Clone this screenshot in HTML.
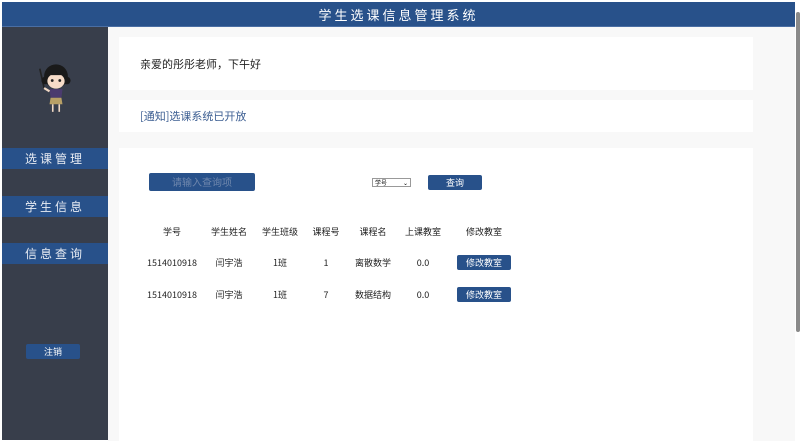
<!DOCTYPE html>
<html><head><meta charset="utf-8"><style>
*{margin:0;padding:0;box-sizing:border-box}
body{width:800px;height:441px;overflow:hidden;background:#fff;font-family:"Noto Sans CJK SC","Liberation Sans",sans-serif;position:relative}
.a{position:absolute}
.hdr{left:2px;top:2px;width:793px;height:25px;background:#28518a;color:#fff;font-size:13px;letter-spacing:3px;text-align:center;line-height:25px;border-bottom:1px solid #4a6ea3}
.side{left:2px;top:27px;width:106px;height:413px;background:#383e4b}
.main{left:108px;top:27px;width:687px;height:414px;background:#f8f8f8}
.card{background:#fff;left:119px;width:634px}
.nav{left:2px;width:106px;height:21px;background:#28518a;color:#e8ecf3;font-size:12px;letter-spacing:3px;text-align:center;line-height:21px}
.btn{background:#28518a;color:#fff;border-radius:2px;font-size:9px;text-align:center}
.c{position:absolute;font-size:9px;line-height:12px;color:#222;transform:translateX(-50%);white-space:nowrap}
.sb{left:796px;top:12px;width:4px;height:320px;background:#8a8a8a;border-radius:2px}
</style></head><body>
<div class="a hdr">学生选课信息管理系统</div>
<div class="a side"></div>
<div class="a main"></div>
<div class="a sb"></div>
<svg class="a" style="left:34px;top:60px" width="44" height="54" viewBox="0 0 40 50">
<line x1="5" y1="8" x2="9" y2="26" stroke="#222" stroke-width="1.5"/>
<circle cx="20" cy="15" r="11" fill="#1a1a1a"/>
<circle cx="10" cy="19" r="3.5" fill="#1a1a1a"/><circle cx="30" cy="19" r="3.5" fill="#1a1a1a"/>
<ellipse cx="20" cy="19.5" rx="8" ry="7" fill="#f6dcc8"/>
<rect x="12" y="9" width="16" height="5" fill="#1a1a1a"/>
<circle cx="16.5" cy="19" r="1.3" fill="#222"/><circle cx="23.5" cy="19" r="1.3" fill="#222"/>
<path d="M14 27 L26 27 L25 35 L15 35Z" fill="#4b3b6e"/>
<path d="M15 35 L25 35 L26 41 L14 41Z" fill="#b8a066"/>
<line x1="17" y1="41" x2="17" y2="48" stroke="#f0d8c4" stroke-width="1.5"/>
<line x1="23" y1="41" x2="23" y2="48" stroke="#f0d8c4" stroke-width="1.5"/>
<path d="M9 26 L14 29" stroke="#f0d8c4" stroke-width="2"/>
</svg>
<div class="a nav" style="top:148px">选课管理</div>
<div class="a nav" style="top:196px">学生信息</div>
<div class="a nav" style="top:243px">信息查询</div>
<div class="a btn" style="left:26px;top:344px;width:54px;height:15px;line-height:15px">注销</div>
<div class="a card" style="top:37px;height:53px"><div class="a" style="left:21px;top:20px;font-size:11px;line-height:14px;color:#222">亲爱的彤彤老师，下午好</div></div>
<div class="a card" style="top:100px;height:32px"><div class="a" style="left:21px;top:9px;font-size:11px;line-height:14px;color:#3c5e92">[通知]选课系统已开放</div></div>
<div class="a card" style="top:148px;height:293px"></div>
<div class="a btn" style="left:149px;top:173px;width:106px;height:18px;line-height:18px;color:#6f87ad;font-size:10px">请输入查询项</div>
<div class="a" style="left:372px;top:178px;width:39px;height:9px;border:1px solid #999;background:#fff;font-size:6px;line-height:7px;padding-left:2px">学号<span style="position:absolute;right:2px;top:0">⌄</span></div>
<div class="a btn" style="left:428px;top:175px;width:54px;height:15px;line-height:15px">查询</div>
<div class="c" style="left:172px;top:226px">学号</div>
<div class="c" style="left:229px;top:226px">学生姓名</div>
<div class="c" style="left:280px;top:226px">学生班级</div>
<div class="c" style="left:326px;top:226px">课程号</div>
<div class="c" style="left:373px;top:226px">课程名</div>
<div class="c" style="left:423px;top:226px">上课教室</div>
<div class="c" style="left:484px;top:226px">修改教室</div>
<div class="c" style="left:172px;top:257px">1514010918</div>
<div class="c" style="left:229px;top:257px">闫宇浩</div>
<div class="c" style="left:280px;top:257px">1班</div>
<div class="c" style="left:326px;top:257px">1</div>
<div class="c" style="left:373px;top:257px">离散数学</div>
<div class="c" style="left:423px;top:257px">0.0</div>
<div class="a btn" style="left:457px;top:255px;width:54px;height:15px;line-height:15px">修改教室</div>
<div class="c" style="left:172px;top:289px">1514010918</div>
<div class="c" style="left:229px;top:289px">闫宇浩</div>
<div class="c" style="left:280px;top:289px">1班</div>
<div class="c" style="left:326px;top:289px">7</div>
<div class="c" style="left:373px;top:289px">数据结构</div>
<div class="c" style="left:423px;top:289px">0.0</div>
<div class="a btn" style="left:457px;top:287px;width:54px;height:15px;line-height:15px">修改教室</div>
</body></html>
